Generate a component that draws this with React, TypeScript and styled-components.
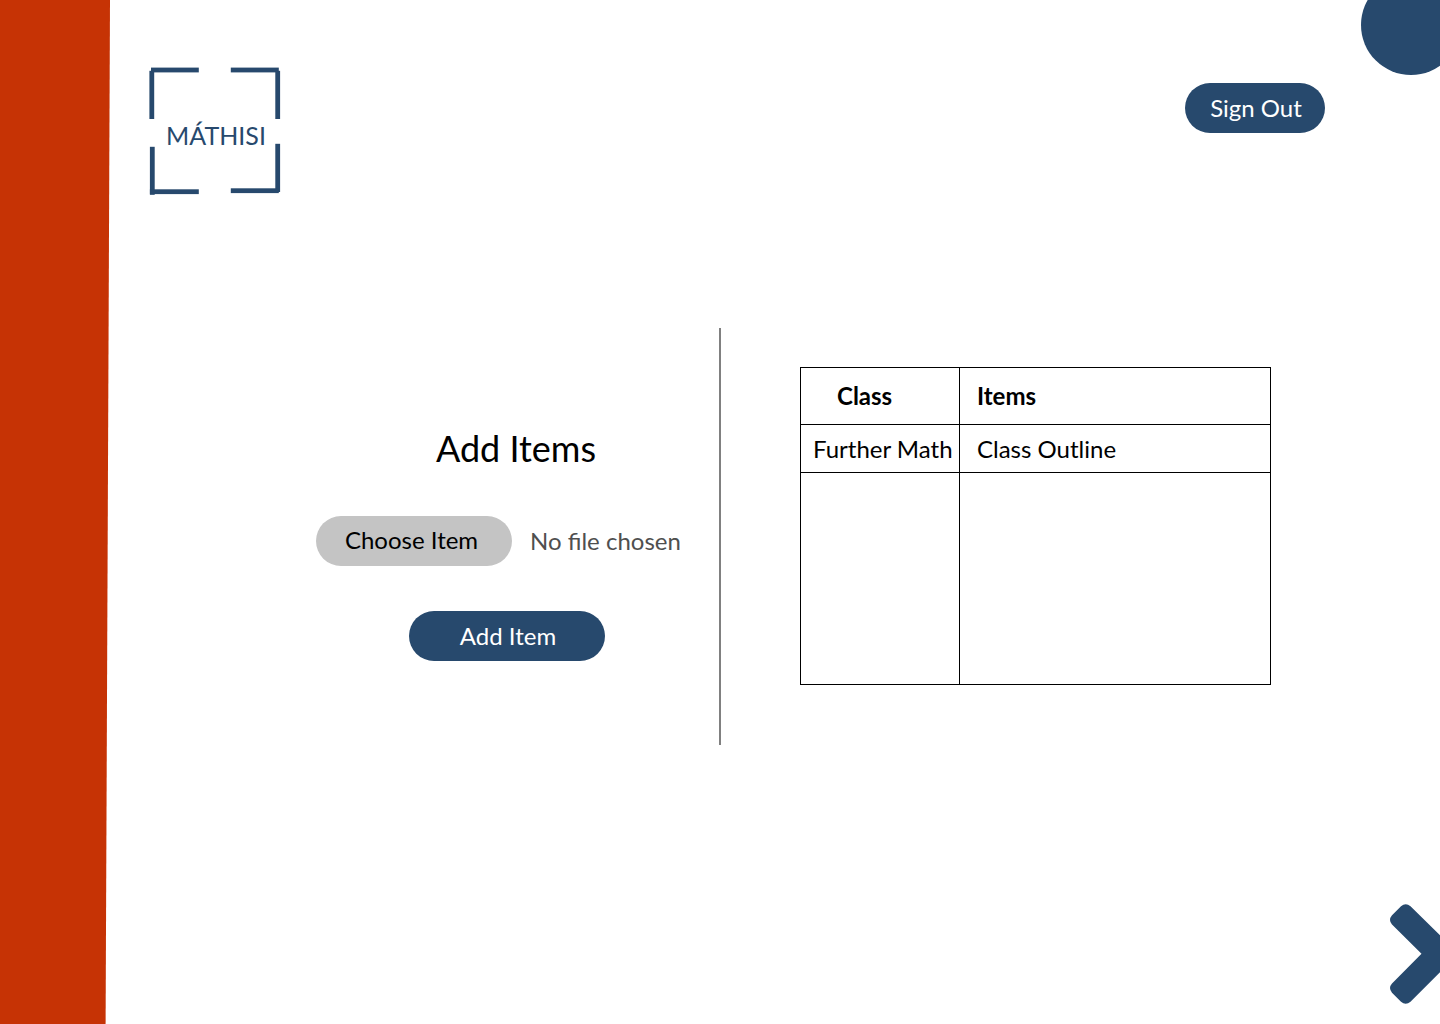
import React, { useState } from "react";
import styled, { createGlobalStyle } from "styled-components";

const navy = "#27496d";
const rust = "#c63305";

const GlobalStyle = createGlobalStyle`
  *, *::before, *::after { box-sizing: border-box; }
  body {
    margin: 0;
    background: #fff;
    color: #000;
    font-family: Lato, "Open Sans", sans-serif;
    font-size: 24px;
    line-height: 30px;
  }
`;

const Page = styled.div`
  position: relative;
  display: grid;
  grid-template-columns: 110px 1fr;
  min-height: 100vh;
  overflow: hidden;
`;

const Stripe = styled.aside`
  background: ${rust};
  clip-path: polygon(0 0, 100% 0, 96% 100%, 0 100%);
`;

const Content = styled.div`
  display: flex;
  flex-direction: column;
`;

const Header = styled.header`
  display: flex;
  justify-content: space-between;
  align-items: flex-start;
  padding: 66px 115px 0 39px;
`;

const Logo = styled.a`
  display: grid;
  place-items: center;
  color: ${navy};
  font-size: 25px;
  text-decoration: none;

  > * { grid-area: 1 / 1; }
`;

const LogoFrame = styled.svg`
  display: block;
  fill: ${navy};
`;

const LogoText = styled.span`
  padding: 8px 0 0 2px;
`;

const Button = styled.button<{ $width: number }>`
  width: ${(p) => p.$width}px;
  height: 50px;
  padding: 0 0 0 2px;
  border: 0;
  border-radius: 25px;
  background: ${navy};
  color: #fff;
  font: inherit;
  cursor: pointer;
`;

const SignOut = styled.div`
  padding-top: 17px;
`;

const Main = styled.main`
  display: grid;
  grid-template-columns: 1fr 2px 1fr;
  padding: 132px 110px 60px 0;
`;

const Divider = styled.div`
  background: #808080;
`;

const FormPanel = styled.section`
  display: flex;
  justify-content: flex-end;
  padding: 99px 21px 0 0;
`;

const Form = styled.form`
  display: flex;
  flex-direction: column;
  align-items: center;
  gap: 45px;
  width: 382px;
`;

const Title = styled.h1`
  margin: 0;
  padding: 0 0 2px 18px;
  font-size: 36px;
  font-weight: 400;
  line-height: 42px;
`;

const FileRow = styled.div`
  display: flex;
  align-items: center;
  align-self: stretch;
  gap: 18px;
`;

const FileInput = styled.input`
  position: absolute;
  width: 1px;
  height: 1px;
  overflow: hidden;
  clip-path: inset(50%);
`;

const FileLabel = styled.label`
  display: flex;
  align-items: center;
  justify-content: center;
  width: 196px;
  height: 50px;
  padding: 0 5px 2px 0;
  border-radius: 25px;
  background: #c4c4c4;
  cursor: pointer;
`;

const FileName = styled.output`
  color: #4f4f4f;
  white-space: nowrap;
`;

const TablePanel = styled.section`
  padding: 39px 59px 60px 79px;
`;

const Table = styled.table`
  width: 100%;
  table-layout: fixed;
  border: solid #000;
  border-width: 1px 0 0 1px;
  border-spacing: 0;
`;

const Row = styled.tr<{ $height: number }>`
  height: ${(p) => p.$height}px;
`;

const ClassHead = styled.th`
  width: 159px;
  padding: 0 0 0 36px;
  border: solid #000;
  border-width: 0 1px 1px 0;
  text-align: left;
`;

const ItemsHead = styled(ClassHead)`
  width: auto;
  padding-left: 17px;
`;

const ClassCell = styled.td`
  padding: 0 0 0 12px;
  border: solid #000;
  border-width: 0 1px 1px 0;
  white-space: nowrap;
`;

const ItemsCell = styled(ClassCell)`
  padding-left: 17px;
`;

const Circle = styled.div`
  position: absolute;
  top: -25px;
  right: -21px;
  width: 100px;
  height: 100px;
  border-radius: 50%;
  background: ${navy};
`;

const NextButton = styled.button`
  position: absolute;
  right: 0;
  bottom: 20px;
  padding: 0;
  border: 0;
  background: none;
  cursor: pointer;

  svg { display: block; fill: ${navy}; }
`;

export default function App() {
  const [fileName, setFileName] = useState("No file chosen");

  return (
    <>
      <GlobalStyle />
      <Page>
        <Stripe />
        <Content>
          <Header>
            <Logo href="#">
              <LogoFrame width="132" height="130" viewBox="0 0 132 130" aria-hidden="true">
                <rect x="2" y="1.6" width="47.8" height="4.8" />
                <rect x="0.4" y="4.8" width="4.8" height="48.2" />
                <rect x="81.8" y="1.6" width="48" height="4.8" />
                <rect x="126.3" y="4.8" width="4.8" height="48.2" />
                <rect x="0.9" y="80.8" width="4.8" height="48" />
                <rect x="0.9" y="123.3" width="48.9" height="4.8" />
                <rect x="126.3" y="77.8" width="4.8" height="48.2" />
                <rect x="81.8" y="122.3" width="48" height="4.8" />
              </LogoFrame>
              <LogoText>MÁTHISI</LogoText>
            </Logo>
            <SignOut>
              <Button type="button" $width={140}>Sign Out</Button>
            </SignOut>
          </Header>
          <Main>
            <FormPanel>
              <Form onSubmit={(e) => e.preventDefault()}>
                <Title>Add Items</Title>
                <FileRow>
                  <FileInput
                    id="item-file"
                    type="file"
                    onChange={(e) => setFileName(e.target.files?.[0]?.name ?? "No file chosen")}
                  />
                  <FileLabel htmlFor="item-file">Choose Item</FileLabel>
                  <FileName htmlFor="item-file">{fileName}</FileName>
                </FileRow>
                <Button type="submit" $width={196}>Add Item</Button>
              </Form>
            </FormPanel>
            <Divider />
            <TablePanel>
              <Table>
                <thead>
                  <Row $height={57}>
                    <ClassHead scope="col">Class</ClassHead>
                    <ItemsHead scope="col">Items</ItemsHead>
                  </Row>
                </thead>
                <tbody>
                  <Row $height={48}>
                    <ClassCell>Further Math</ClassCell>
                    <ItemsCell>Class Outline</ItemsCell>
                  </Row>
                  <Row $height={212}>
                    <ClassCell />
                    <ItemsCell />
                  </Row>
                </tbody>
              </Table>
            </TablePanel>
          </Main>
        </Content>
        <Circle />
        <NextButton type="button" aria-label="Next">
          <svg width="50" height="100" viewBox="0 0 50 100" aria-hidden="true">
            <path d="M11 2.3Q15.7 -2 20.5 2.3L50 31.3V68.2L20.5 97.7Q15.7 102 11 97.7L2 88.7Q-2 84 2 79.5L31.5 49.7L2 20.5Q-2 16 2 11.3Z" />
          </svg>
        </NextButton>
      </Page>
    </>
  );
}
